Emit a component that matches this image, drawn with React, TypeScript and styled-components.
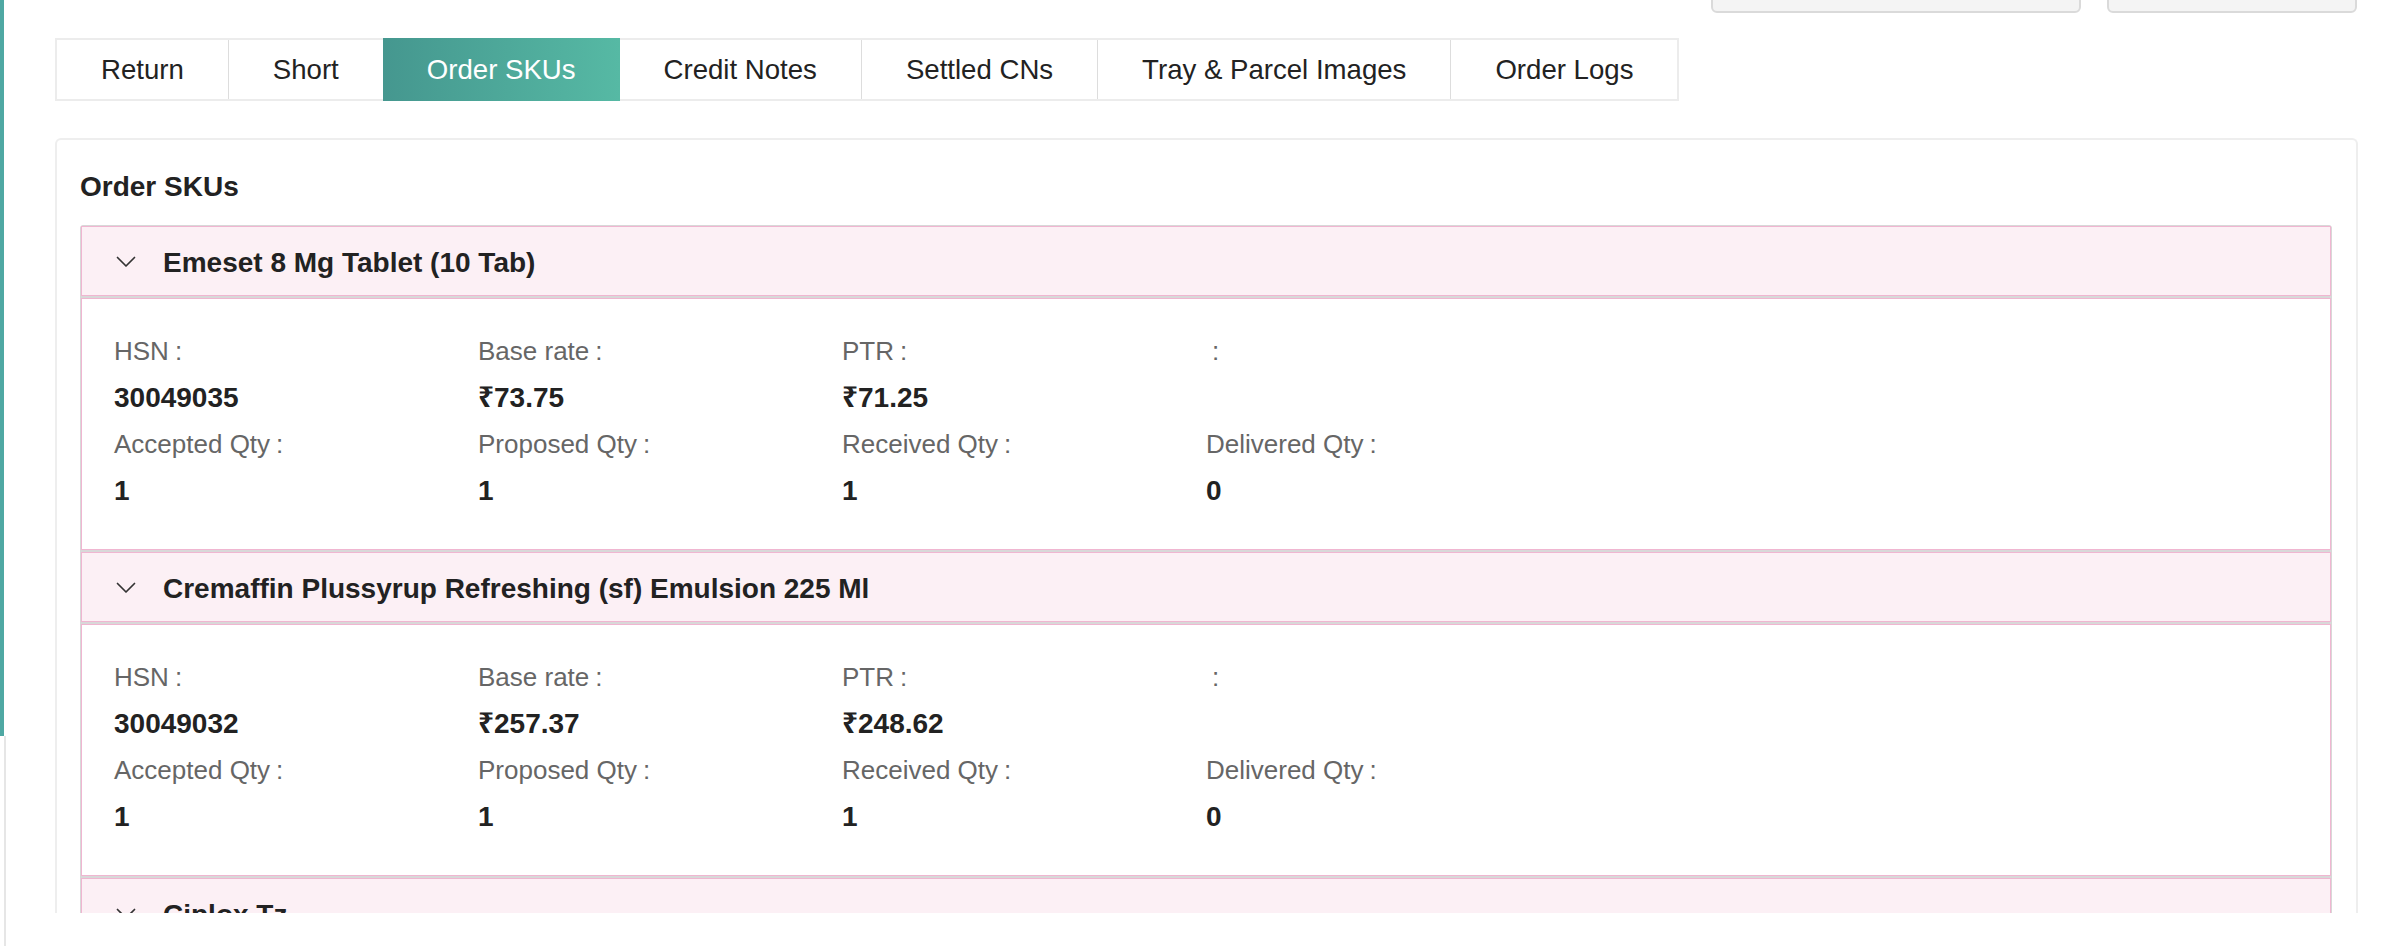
import React from "react";
import styled, { createGlobalStyle, css } from "styled-components";

const GlobalStyle = createGlobalStyle`
  html, body {
    margin: 0;
    padding: 0;
    background: #ffffff;
  }
  body {
    font-family: "Liberation Sans", "Noto Sans", "DejaVu Sans", sans-serif;
    color: #222222;
  }
  * { box-sizing: border-box; }
`;

const Page = styled.div`
  display: flex;
  width: 2406px;
  height: 946px;
  overflow: hidden;
  background: #ffffff;
`;

const Rail = styled.div`
  width: 6px;
  flex: 0 0 6px;
  display: flex;
  flex-direction: column;
`;

const RailThumb = styled.div`
  width: 4px;
  height: 736px;
  flex: 0 0 auto;
  background: #4fa8a3;
`;

const RailTrack = styled.div`
  flex: 1;
  width: 2px;
  margin-left: 4px;
  background: #e6e6e6;
`;

const Main = styled.main`
  flex: 1;
  height: 913px;
  overflow: hidden;
  padding: 0 48px 0 49px;
  display: flex;
  flex-direction: column;
  & > * {
    flex-shrink: 0;
  }
`;

const Toolbar = styled.div`
  height: 13px;
  display: flex;
  justify-content: flex-end;
  align-items: flex-end;
  gap: 26px;
  overflow: hidden;
  padding-right: 1px;
`;

const ToolButton = styled.div<{ $w: number }>`
  width: ${(p) => p.$w}px;
  height: 50px;
  flex: 0 0 auto;
  background: #f4f4f4;
  border: 2px solid #dadada;
  border-radius: 6px;
`;

const TabBar = styled.nav`
  margin-top: 25px;
  align-self: flex-start;
  display: flex;
  height: 63px;
  border: 2px solid #ececec;
`;

const Tab = styled.div<{ $active?: boolean; $first?: boolean }>`
  display: flex;
  align-items: center;
  padding: 0 44px;
  font-size: 27.6px;
  color: #222222;
  background: #ffffff;
  white-space: nowrap;
  border-left: ${(p) => (p.$first ? "none" : "1px solid #dddddd")};
  ${(p) =>
    p.$active &&
    css`
      margin: -2px 0;
      border-left: none;
      color: #ffffff;
      background: linear-gradient(90deg, #45978f 0%, #56b9a4 100%);
      & + div {
        border-left: none;
      }
    `}
`;

const Card = styled.section`
  margin-top: 37px;
  border: 2px solid #eeeeee;
  border-bottom: none;
  border-radius: 6px 6px 0 0;
  padding: 31px 24px 0 23px;
`;

const CardTitle = styled.h2`
  margin: 0 0 23px 0;
  font-size: 28px;
  line-height: 31px;
  font-weight: 700;
  color: #222222;
`;

const Accordion = styled.div`
  display: flex;
  flex-direction: column;
  gap: 2px;
  border: 1px solid #d8d8d8;
  background: #d8d8d8;
  border-radius: 3px 3px 0 0;
`;

const ItemHeader = styled.div`
  display: flex;
  align-items: center;
  gap: 27px;
  height: 70px;
  padding: 3px 0 0 34px;
  background: #fcf0f5;
  border: 1px solid #f0b6d1;
  font-size: 28px;
  font-weight: 700;
  color: #222222;
  white-space: nowrap;
`;

const Chevron = styled.svg`
  width: 20px;
  height: 12px;
  flex: 0 0 auto;
  margin-top: -2px;
`;

const ItemBody = styled.div`
  background: #ffffff;
  border: 1px solid #f0b6d1;
  padding: 29px 32px 35px 32px;
`;

const FieldRow = styled.div`
  display: grid;
  grid-template-columns: repeat(6, 1fr);
`;

const Field = styled.div`
  display: flex;
  flex-direction: column;
`;

const Label = styled.div`
  font-size: 26px;
  line-height: 46px;
  height: 46px;
  color: #666666;
  white-space: nowrap;
`;

const Colon = styled.span`
  margin-left: 6px;
`;

const Value = styled.div`
  font-size: 28px;
  line-height: 47px;
  height: 47px;
  font-weight: 700;
  color: #222222;
  white-space: nowrap;
`;

type Sku = {
  name: string;
  hsn: string;
  base: string;
  ptr: string;
  accepted: string;
  proposed: string;
  received: string;
  delivered: string;
  open: boolean;
};

const skus: Sku[] = [
  {
    name: "Emeset 8 Mg Tablet (10 Tab)",
    hsn: "30049035",
    base: "₹73.75",
    ptr: "₹71.25",
    accepted: "1",
    proposed: "1",
    received: "1",
    delivered: "0",
    open: true,
  },
  {
    name: "Cremaffin Plussyrup Refreshing (sf) Emulsion 225 Ml",
    hsn: "30049032",
    base: "₹257.37",
    ptr: "₹248.62",
    accepted: "1",
    proposed: "1",
    received: "1",
    delivered: "0",
    open: true,
  },
  {
    name: "Ciplox Tz",
    hsn: "",
    base: "",
    ptr: "",
    accepted: "",
    proposed: "",
    received: "",
    delivered: "",
    open: false,
  },
];

const tabs = [
  "Return",
  "Short",
  "Order SKUs",
  "Credit Notes",
  "Settled CNs",
  "Tray & Parcel Images",
  "Order Logs",
];

const FieldCell: React.FC<{ label: string; value: string }> = ({ label, value }) => (
  <Field>
    <Label>
      {label}
      <Colon>:</Colon>
    </Label>
    <Value>{value}</Value>
  </Field>
);

const ChevronDown = () => (
  <Chevron viewBox="0 0 20 12" fill="none">
    <polyline
      points="1.5,1.5 10,10 18.5,1.5"
      stroke="#333333"
      strokeWidth="1.7"
      strokeLinecap="round"
      strokeLinejoin="round"
    />
  </Chevron>
);

export default function App() {
  return (
    <>
      <GlobalStyle />
      <Page>
        <Rail>
          <RailThumb />
          <RailTrack />
        </Rail>
        <Main>
          <Toolbar>
            <ToolButton $w={370} />
            <ToolButton $w={250} />
          </Toolbar>
          <TabBar>
            {tabs.map((t, i) => (
              <Tab key={t} $first={i === 0} $active={t === "Order SKUs"}>
                {t}
              </Tab>
            ))}
          </TabBar>
          <Card>
            <CardTitle>Order SKUs</CardTitle>
            <Accordion>
              {skus.map((s) => (
                <React.Fragment key={s.name}>
                  <ItemHeader>
                    <ChevronDown />
                    {s.name}
                  </ItemHeader>
                  {s.open && (
                    <ItemBody>
                      <FieldRow>
                        <FieldCell label="HSN" value={s.hsn} />
                        <FieldCell label="Base rate" value={s.base} />
                        <FieldCell label="PTR" value={s.ptr} />
                        <FieldCell label="" value="" />
                      </FieldRow>
                      <FieldRow>
                        <FieldCell label="Accepted Qty" value={s.accepted} />
                        <FieldCell label="Proposed Qty" value={s.proposed} />
                        <FieldCell label="Received Qty" value={s.received} />
                        <FieldCell label="Delivered Qty" value={s.delivered} />
                      </FieldRow>
                    </ItemBody>
                  )}
                </React.Fragment>
              ))}
            </Accordion>
          </Card>
        </Main>
      </Page>
    </>
  );
}
